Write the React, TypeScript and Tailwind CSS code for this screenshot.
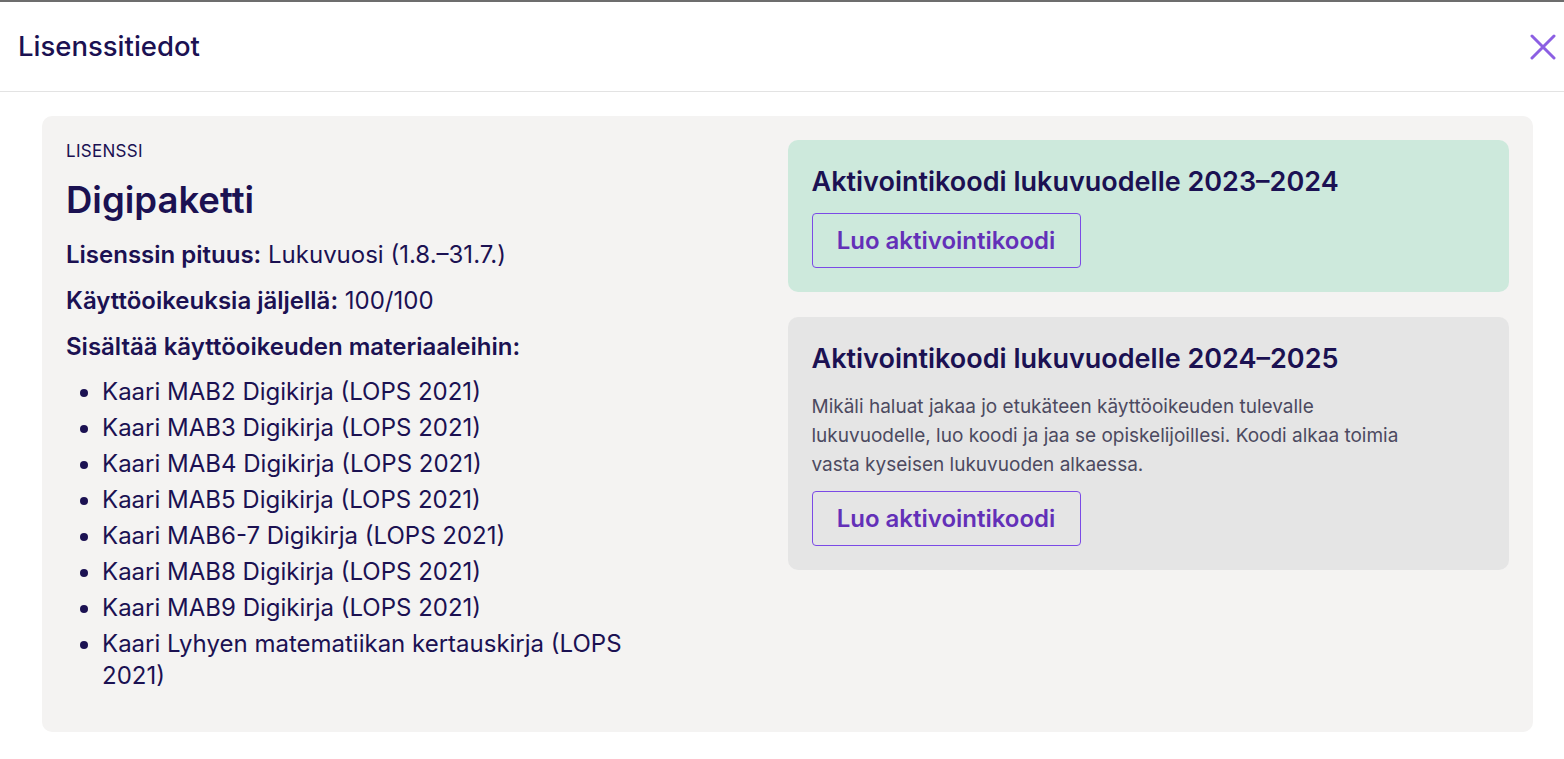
const materials = [
  "Kaari MAB2 Digikirja (LOPS 2021)",
  "Kaari MAB3 Digikirja (LOPS 2021)",
  "Kaari MAB4 Digikirja (LOPS 2021)",
  "Kaari MAB5 Digikirja (LOPS 2021)",
  "Kaari MAB6-7 Digikirja (LOPS 2021)",
  "Kaari MAB8 Digikirja (LOPS 2021)",
  "Kaari MAB9 Digikirja (LOPS 2021)",
  "Kaari Lyhyen matematiikan kertauskirja (LOPS 2021)",
];

const CodeButton = () => (
  <button className="h-[55px] w-[269px] rounded-[4px] border border-[#7b4ae6] text-[24px] font-semibold text-[#6330b8]">
    Luo aktivointikoodi
  </button>
);

const App = () => {
  return (
    <div
      className="min-h-screen bg-white text-[#1b1152]"
      style={{ fontFamily: "Inter, 'Noto Sans', sans-serif" }}
    >
      <div className="h-[2px] bg-[#6d6d6d]" />

      {/* Header */}
      <div className="flex h-[90px] items-center justify-between border-b border-[#e3e3e3] pl-[18px] pr-[6px]">
        <h1 className="text-[27.5px] font-medium">Lisenssitiedot</h1>
        <button aria-label="Sulje" className="flex h-[30px] w-[30px] items-center justify-center">
          <svg width="26" height="26" viewBox="0 0 26 26" fill="none" stroke="#8c5fe3" strokeWidth="3" strokeLinecap="round">
            <path d="M2 2L24 24M24 2L2 24" />
          </svg>
        </button>
      </div>

      {/* Body */}
      <div className="pl-[42px] pr-[31px] pt-[24px] pb-[26px]">
        <div className="grid grid-cols-2 rounded-[10px] bg-[#f4f3f2] p-[24px] pb-[40px]">
          {/* License info */}
          <div className="max-w-[600px]">
            <div className="text-[17px] leading-[22px] tracking-[0.3px]">LISENSSI</div>
            <h2 className="mt-[16px] text-[36.5px] font-semibold leading-[44px]">Digipaketti</h2>
            <p className="mt-[15px] text-[24px] leading-[36px]">
              <span className="font-semibold">Lisenssin pituus:</span> Lukuvuosi (1.8.–31.7.)
            </p>
            <p className="mt-[10px] text-[24px] leading-[36px]">
              <span className="font-semibold">Käyttöoikeuksia jäljellä:</span> 100/100
            </p>
            <p className="mt-[10px] text-[24px] font-semibold leading-[36px]">
              Sisältää käyttöoikeuden materiaaleihin:
            </p>
            <ul className="mt-[11px] list-disc pl-[36px] text-[24px] leading-[32px]">
              {materials.map((m) => (
                <li key={m} className="mb-[4px] last:mb-0">
                  {m}
                </li>
              ))}
            </ul>
          </div>

          {/* Activation codes */}
          <div className="flex flex-col gap-[25px]">
            <div className="rounded-[10px] bg-[#cde9dc] p-[24px]">
              <h3 className="text-[27px] font-semibold leading-[36px]">Aktivointikoodi lukuvuodelle 2023–2024</h3>
              <div className="mt-[13px]">
                <CodeButton />
              </div>
            </div>
            <div className="rounded-[10px] bg-[#e5e5e5] p-[24px]">
              <h3 className="text-[27px] font-semibold leading-[36px]">Aktivointikoodi lukuvuodelle 2024–2025</h3>
              <p className="mt-[15px] max-w-[616px] text-[19px] leading-[29px] text-[#4c4a60]">
                Mikäli haluat jakaa jo etukäteen käyttöoikeuden tulevalle lukuvuodelle, luo koodi ja jaa se opiskelijoillesi. Koodi alkaa toimia vasta kyseisen lukuvuoden alkaessa.
              </p>
              <div className="mt-[12px]">
                <CodeButton />
              </div>
            </div>
          </div>
        </div>
      </div>
    </div>
  );
};

export default App;
